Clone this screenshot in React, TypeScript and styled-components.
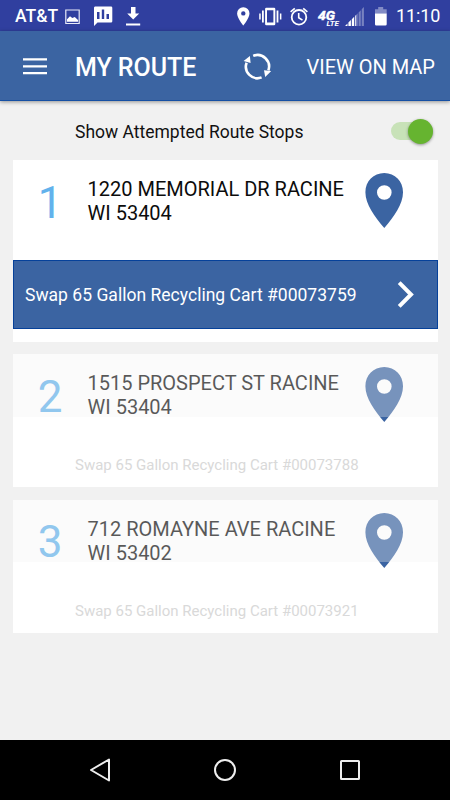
import React from "react";
import styled, { createGlobalStyle } from "styled-components";

const GlobalStyle = createGlobalStyle`
  * { box-sizing: border-box; }
  body { margin: 0; background: #f1f1f1; font-family: Roboto, "Noto Sans", sans-serif; }
  svg { display: block; flex: none; }
`;

const Screen = styled.div`
  width: 450px;
  height: 800px;
  display: flex;
  flex-direction: column;
  background: #f1f1f1;
  overflow: hidden;
`;

const StatusBar = styled.header`
  height: 31px;
  flex: none;
  display: flex;
  align-items: center;
  padding: 1px 10px 0 15px;
  background: #303f9f;
  color: #fff;
`;

const Carrier = styled.span`
  width: 50px;
  font-size: 17.5px;
  font-weight: 500;
  line-height: 20px;
  white-space: nowrap;
`;

const SystemGroup = styled.div`
  margin-left: auto;
  display: flex;
  align-items: center;
  gap: 5px;
`;

const Clock = styled.time`
  width: 44px;
  font-size: 18px;
  line-height: 22px;
  letter-spacing: -0.1px;
  white-space: nowrap;
`;

const AppBar = styled.div`
  height: 70px;
  flex: none;
  display: flex;
  align-items: center;
  padding: 2px 15px 0 23px;
  background: #3b64a2;
  border-bottom: 1px solid #1650a4;
  box-shadow: 0 1px 4px rgba(0, 0, 0, 0.4);
  color: #fff;
`;

const IconButton = styled.button`
  display: flex;
  padding: 0;
  border: 0;
  background: none;
  color: inherit;
`;

const Title = styled.h1`
  width: 168px;
  margin: 0 0 0 28px;
  padding-top: 2px;
  font-size: 25px;
  font-weight: 500;
  line-height: 30px;
  letter-spacing: -0.05px;
  white-space: nowrap;
`;

const TextButton = styled.button`
  margin-left: auto;
  padding: 0;
  border: 0;
  background: none;
  color: #fff;
  font: 400 20px/24px Roboto, sans-serif;
  white-space: nowrap;
`;

const FilterRow = styled.div`
  height: 59px;
  flex: none;
  display: flex;
  align-items: center;
  justify-content: space-between;
  padding: 2px 17px 0 75px;
  color: #111;
  font-size: 17.5px;
  line-height: 22px;
`;

const Toggle = styled.button`
  width: 42px;
  height: 18px;
  display: flex;
  align-items: center;
  justify-content: flex-end;
  margin-top: -1px;
  padding: 0;
  border: 0;
  border-radius: 9px;
  background: #c8e2b8;
`;

const Knob = styled.span`
  width: 25px;
  height: 25px;
  flex: none;
  border-radius: 50%;
  background: #66b430;
  box-shadow: 0 1px 3px rgba(0, 0, 0, 0.4);
`;

const StopList = styled.main`
  flex: 1;
  display: flex;
  flex-direction: column;
  gap: 12.5px;
  padding: 0 12.5px;
`;

const Card = styled.article<{ $active?: boolean }>`
  position: relative;
  height: ${(p) => (p.$active ? 181.5 : 133)}px;
  flex: none;
  display: flex;
  flex-direction: column;
  background: #fff;
`;

const StopHeader = styled.div<{ $active?: boolean }>`
  height: ${(p) => (p.$active ? 100 : 63)}px;
  flex: none;
  display: flex;
  align-items: flex-start;
`;

const StopNumber = styled.span`
  width: 75px;
  padding-top: 16.5px;
  text-align: center;
  color: #62b2ec;
  font-size: 44px;
  line-height: 52px;
`;

const Address = styled.address`
  width: 277.5px;
  padding-top: 17.2px;
  color: #0c0c0c;
  font-size: 20px;
  font-style: normal;
  line-height: 24px;
  white-space: pre-line;
`;

const PinSlot = styled.div`
  padding-top: 13px;
`;

const Dimmer = styled.div`
  position: absolute;
  inset: 0 0 auto;
  height: 62.5px;
  background: rgba(242, 242, 242, 0.33);
`;

const ActiveTask = styled.div`
  height: 69px;
  display: flex;
  align-items: center;
  justify-content: space-between;
  padding: 1px 22px 0 11.5px;
  border: 1px solid #06419a;
  background: #3b64a2;
  color: #fff;
  font-size: 17.5px;
  line-height: 20px;
  letter-spacing: 0.02px;
`;

const PendingTask = styled.div`
  padding: 39.2px 0 0 62.5px;
  color: #d9d9d9;
  font-size: 15px;
  line-height: 18px;
`;

const NavBar = styled.nav`
  height: 60px;
  flex: none;
  display: grid;
  grid-template-columns: repeat(3, 125px);
  justify-content: center;
  align-items: center;
  justify-items: center;
  background: #000;
`;

const NotificationIcons = () => (
  <svg width="80" height="30" viewBox="65 0 80 30" fill="#fff">
    <path d="M65.8 9h13.4v13.5H65.8z" fill="none" stroke="#e8eaf8" strokeWidth="1.2" />
    <path d="M67 20.8v-2.5l3-3 2.3 1.8 2.5-1 3.2 2.8v1.9z" />
    <path fillRule="evenodd" d="M95 5.5h16a1.3 1.3 0 0 1 1.3 1.3v13.5a1.3 1.3 0 0 1-1.3 1.3H97.5L94 25V6.8a1.3 1.3 0 0 1 1-1.3zM97 11v7h2.5v-7zM101.8 8.5V18h2.4V8.5zM106.5 13v5h2.5v-5z" />
    <path d="M131 6h4.5v6.5h3.7l-6 6-6-6h3.8zM126 22.5h14.2v2H126z" />
  </svg>
);

const SystemIcons = () => (
  <svg width="156" height="30" viewBox="235 0 156 30" fill="#fff">
    <path fillRule="evenodd" d="M243.3 6.3a6.1 6.1 0 0 0-6.2 6.1c0 4.6 6.2 12 6.2 12s6.2-7.4 6.2-12a6.1 6.1 0 0 0-6.2-6.1zm0 3.9a2.2 2.2 0 1 1 0 4.4 2.2 2.2 0 0 1 0-4.4z" />
    <path fillRule="evenodd" d="M266.3 6.7h7.8a1.2 1.2 0 0 1 1.2 1.2v15.2a1.2 1.2 0 0 1-1.2 1.2h-7.8a1.2 1.2 0 0 1-1.2-1.2V7.9a1.2 1.2 0 0 1 1.2-1.2zm.7 2.6v12.3h6.4V9.3zM262 9.5h1.8v12H262zM276.6 9.5h1.8v12h-1.8zM259.2 12.5h1.5v6h-1.5zM279.9 12.5h1.5v6h-1.5z" />
    <g fill="none" stroke="#fff" strokeWidth="1.8">
      <circle cx="299" cy="16.3" r="7.3" />
      <path d="M298.7 12v4.7l3.8 2.5M290.6 10.8l4.2-3.5M303.2 7.3l4.2 3.5" strokeWidth="1.6" />
    </g>
    <text x="318" y="19.3" fontFamily="Roboto, sans-serif" fontSize="13.5" fontWeight="700" fontStyle="italic" textLength="17" lengthAdjust="spacingAndGlyphs" stroke="#fff" strokeWidth=".5">4G</text>
    <text x="326.5" y="25" fontFamily="Roboto, sans-serif" fontSize="7" fontWeight="700" fontStyle="italic" textLength="12.5" lengthAdjust="spacingAndGlyphs">LTE</text>
    <path d="M345 25l2.5-2.4V25zM348.4 25v-3.4l2.5-2.5V25zM351.8 25v-6.8l2.4-2.4V25zM355.2 25V14.8l.9-.9V25z" />
    <path opacity=".35" d="M356.1 25V13.9l1.6-1.6V25zM358.6 25V11.4l2.2-2.2V25zM361.7 25V8.3l2.2-2.2V25z" />
    <path opacity=".4" d="M375 8.2h3.2V6.1h5V8.2h3.5v4.5H375z" />
    <path d="M375 12.4h11.7v10.9a1.3 1.3 0 0 1-1.3 1.3h-9.1a1.3 1.3 0 0 1-1.3-1.3z" />
  </svg>
);

const MenuIcon = () => (
  <svg width="24" height="18" viewBox="0 0 24 18" fill="#fff">
    <path d="M0 .3h24v2.3H0zM0 7.2h24v2.3H0zM0 14h24v2.3H0z" />
  </svg>
);

const SyncIcon = () => (
  <svg width="28" height="28" viewBox="243 52.7 28 28" fill="none" stroke="#fff" strokeWidth="2.6">
    <path d="M253.2 55.6A11.5 11.5 0 0 1 268.4 70M261.6 77.1A11.5 11.5 0 0 1 246.6 62.5" />
    <path fill="#fff" stroke="none" d="M243.6 60.8l6.3-5 .7 7zM264 69.9l7.2.9-6 5.8z" />
  </svg>
);

const PinIcon = () => (
  <svg width="39" height="56" viewBox="0 0 39 56">
    <path
      fill="#3b64a2"
      fillRule="evenodd"
      d="M19.3 0C8.5 0 .4 8.3.4 19.2.4 31.5 9.5 43.2 19.3 55c9.8-11.8 18.7-23.5 18.7-35.8C38 8.3 29.9 0 19.3 0zm0 12.2a7.3 7.3 0 1 1 0 14.6 7.3 7.3 0 0 1 0-14.6z"
    />
  </svg>
);

const ChevronIcon = () => (
  <svg width="18" height="28" viewBox="0 0 18 28" fill="none" stroke="#fff" strokeWidth="4">
    <path d="M2.2 1.7L14 13.5 2.2 25.3" />
  </svg>
);

type Stop = { number: number; address: string; task: string; active?: boolean };

const stops: Stop[] = [
  { number: 1, address: "1220 MEMORIAL DR RACINE\nWI 53404", task: "Swap 65 Gallon Recycling Cart #00073759", active: true },
  { number: 2, address: "1515 PROSPECT ST RACINE\nWI 53404", task: "Swap 65 Gallon Recycling Cart #00073788" },
  { number: 3, address: "712 ROMAYNE AVE RACINE\nWI 53402", task: "Swap 65 Gallon Recycling Cart #00073921" },
];

const StopCard = ({ stop }: { stop: Stop }) => (
  <Card $active={stop.active}>
    <StopHeader $active={stop.active}>
      <StopNumber>{stop.number}</StopNumber>
      <Address>{stop.address}</Address>
      <PinSlot>
        <PinIcon />
      </PinSlot>
    </StopHeader>
    {stop.active ? (
      <ActiveTask>
        {stop.task}
        <ChevronIcon />
      </ActiveTask>
    ) : (
      <>
        <PendingTask>{stop.task}</PendingTask>
        <Dimmer />
      </>
    )}
  </Card>
);

export default function App() {
  return (
    <>
      <GlobalStyle />
      <Screen>
        <StatusBar>
          <Carrier>AT&amp;T</Carrier>
          <NotificationIcons />
          <SystemGroup>
            <SystemIcons />
            <Clock>11:10</Clock>
          </SystemGroup>
        </StatusBar>
        <AppBar>
          <IconButton aria-label="Menu">
            <MenuIcon />
          </IconButton>
          <Title>MY ROUTE</Title>
          <IconButton aria-label="Refresh">
            <SyncIcon />
          </IconButton>
          <TextButton>VIEW ON MAP</TextButton>
        </AppBar>
        <FilterRow>
          Show Attempted Route Stops
          <Toggle role="switch" aria-checked="true" aria-label="Show Attempted Route Stops">
            <Knob />
          </Toggle>
        </FilterRow>
        <StopList>
          {stops.map((stop) => (
            <StopCard key={stop.number} stop={stop} />
          ))}
        </StopList>
        <NavBar>
          <svg width="24" height="26" viewBox="0 0 24 26" fill="none" stroke="#eee" strokeWidth="2" strokeLinejoin="round">
            <path d="M21 2.5v21L3 13z" />
          </svg>
          <svg width="24" height="24" viewBox="0 0 24 24" fill="none" stroke="#eee" strokeWidth="2">
            <circle cx="12" cy="12" r="10" />
          </svg>
          <svg width="22" height="22" viewBox="0 0 22 22" fill="none" stroke="#eee" strokeWidth="2">
            <rect x="2" y="2" width="18" height="18" rx=".5" />
          </svg>
        </NavBar>
      </Screen>
    </>
  );
}
